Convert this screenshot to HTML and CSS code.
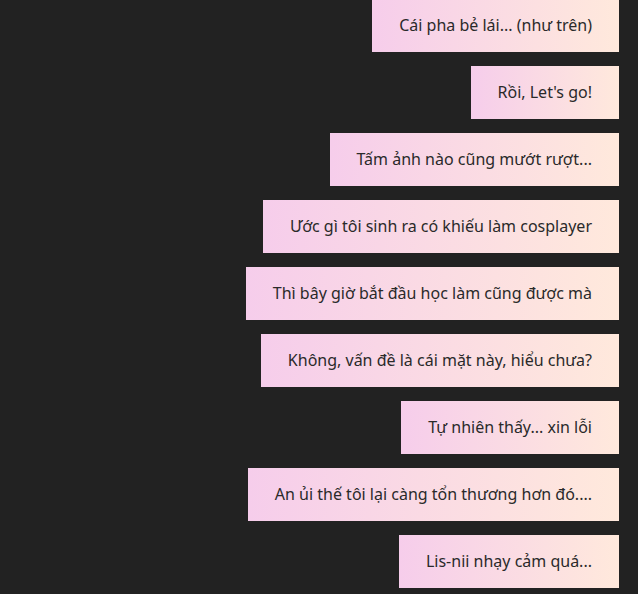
FILE: index.html
```html
<!DOCTYPE html>
<html lang="vi">
<head>
  <meta charset="UTF-8" />
  <meta name="viewport" content="width=device-width, initial-scale=1" />
  <title>Chat</title>
  <link rel="stylesheet" href="styles.css">
</head>
<body>

  <!-- Chat messages -->
  <div id="chat">
    <div class="msg">Cái pha bẻ lái... (như trên)</div>
    <div class="msg">Rồi, Let's go!</div>
    <div class="msg">Tấm ảnh nào cũng mướt rượt...</div>
    <div class="msg">Ước gì tôi sinh ra có khiếu làm cosplayer</div>
    <div class="msg">Thì bây giờ bắt đầu học làm cũng được mà</div>
    <div class="msg">Không, vấn đề là cái mặt này, hiểu chưa?</div>
    <div class="msg">Tự nhiên thấy... xin lỗi</div>
    <div class="msg">An ủi thế tôi lại càng tổn thương hơn đó....</div>
    <div class="msg">Lis-nii nhạy cảm quá...</div>
  </div>

</body>
</html>
```
FILE: styles.css
```css
body {
  font-family: "Noto Sans", "Open Sans", sans-serif;
  background: #222222;
  color: #2a2a2a;
  margin: 0;
  overflow: hidden;
}
#chat {
  display: flex;
  flex-direction: column;
  align-items: flex-end;
  gap: 14px;
  margin-top: -1px;
  padding-right: 19px;
}
.msg {
  background: linear-gradient(90deg, #f6cdeb, #ffe9dc);
  font-size: 16px;
  line-height: 21px;
  padding: 16px 27px;
}
```
